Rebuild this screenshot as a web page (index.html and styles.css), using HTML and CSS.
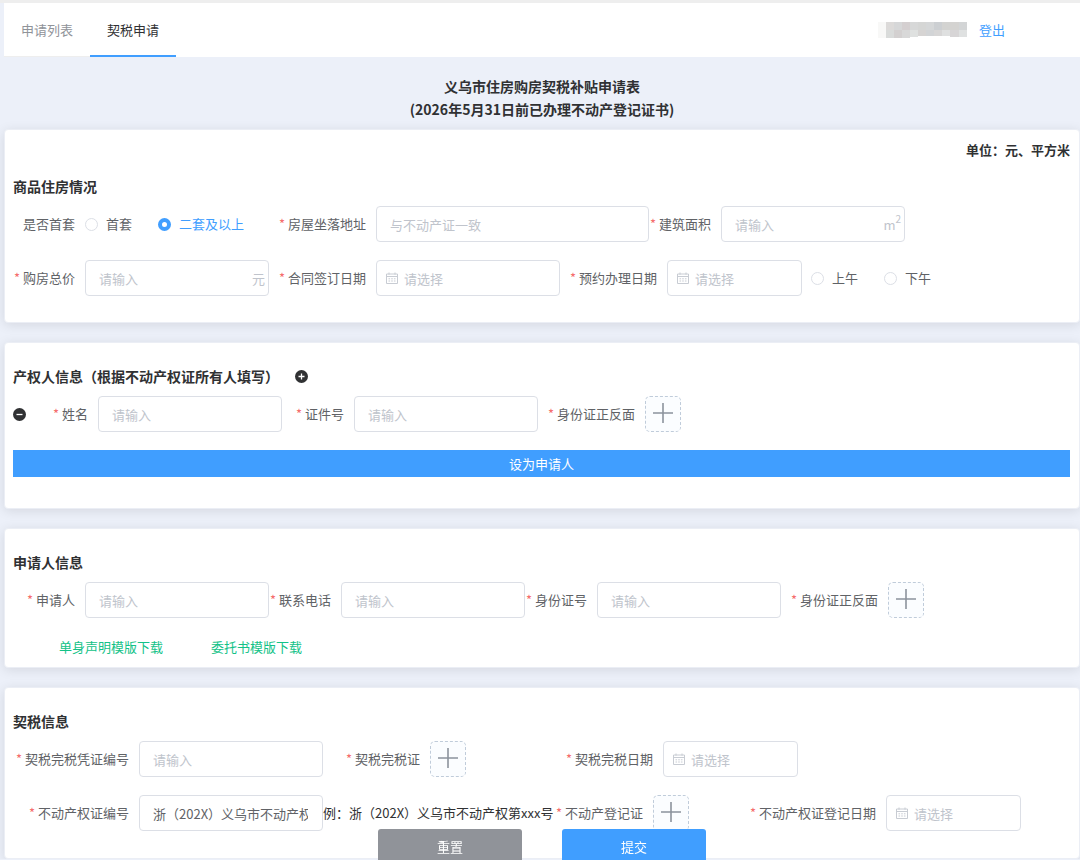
FILE: index.html
```html
<!DOCTYPE html>
<html lang="zh-CN">
<head>
<meta charset="utf-8">
<title>契税申请</title>
<link rel="stylesheet" href="styles.css">
</head>
<body>
<svg class="sprite" aria-hidden="true">
  <symbol id="calendar" viewBox="0 0 12 12">
    <path d="M.5 2h11v9.5H.5zM.5 4.5h11M3 .5v2.2M9 .5v2.2" fill="none" stroke="currentColor"/>
    <path d="M2.5 6.8h1.6M5.2 6.8h1.6M7.9 6.8h1.6M2.5 9h1.6M5.2 9h1.6M7.9 9h1.6" stroke="currentColor"/>
  </symbol>
  <symbol id="plus" viewBox="0 0 20 20">
    <path d="M10 0v20M0 10h20" stroke="currentColor" stroke-width="1.6"/>
  </symbol>
</svg>

<header class="topbar">
  <nav class="tabs">
    <a class="tab" href="#list">申请列表</a>
    <a class="tab tab-active" href="#apply" aria-current="page">契税申请</a>
  </nav>
  <div class="account">
    <svg class="masked-name" viewBox="0 0 89 16" aria-hidden="true" shape-rendering="crispEdges">
      <rect width="8" height="16" fill="#f8f8f7"/>
      <rect x="8" width="8" height="8" fill="#dcdad9"/><rect x="8" y="8" width="8" height="8" fill="#d9dbda"/>
      <rect x="16" width="8" height="8" fill="#d6d7d8"/><rect x="16" y="8" width="8" height="8" fill="#d3d0d0"/>
      <rect x="24" width="8" height="8" fill="#d4cfd0"/><rect x="24" y="8" width="8" height="8" fill="#d8d8d8"/>
      <rect x="32" width="8" height="8" fill="#d7d8d8"/><rect x="32" y="8" width="8" height="7" fill="#dfe1e0"/>
      <rect x="40" width="8" height="8" fill="#d5d6d5"/><rect x="40" y="8" width="8" height="6" fill="#d6d4d3"/>
      <rect x="48" width="8" height="8" fill="#d5d7d8"/><rect x="48" y="8" width="8" height="6" fill="#d2d4d6"/>
      <rect x="56" width="8" height="8" fill="#cccfd2"/><rect x="56" y="8" width="8" height="6" fill="#d7d6d6"/>
      <rect x="64" width="8" height="8" fill="#d3d3d1"/><rect x="64" y="8" width="8" height="6" fill="#dfe0e0"/>
      <rect x="72" width="9" height="8" fill="#d4d3d1"/><rect x="72" y="8" width="9" height="7" fill="#d7d5d6"/>
      <rect x="81" width="8" height="8" fill="#d3d5d6"/><rect x="81" y="8" width="8" height="7" fill="#dfe1e1"/>
    </svg>
    <a class="logout" href="#logout">登出</a>
  </div>
</header>

<form class="page">
  <h1 class="title">义乌市住房购房契税补贴申请表<br>(2026年5月31日前已办理不动产登记证书)</h1>

  <section class="card card-house">
    <p class="unit">单位：元、平方米</p>
    <h2 class="heading">商品住房情况</h2>
    <div class="row">
      <span class="label label-sm">是否首套</span>
      <div class="radios radios-home">
        <label class="radio"><input type="radio" name="home">首套</label>
        <label class="radio"><input type="radio" name="home" checked>二套及以上</label>
      </div>
      <label class="label label-md required" for="address">房屋坐落地址</label>
      <input class="input input-wide" id="address" type="text" placeholder="与不动产证一致">
      <label class="label label-sm required" for="area">建筑面积</label>
      <div class="control">
        <input class="input" id="area" type="text" placeholder="请输入">
        <span class="suffix">m<sup>2</sup></span>
      </div>
    </div>
    <div class="row">
      <label class="label label-sm required" for="price">购房总价</label>
      <div class="control">
        <input class="input" id="price" type="text" placeholder="请输入">
        <span class="suffix">元</span>
      </div>
      <label class="label label-md required" for="signed">合同签订日期</label>
      <div class="control">
        <svg class="prefix"><use href="#calendar"/></svg>
        <input class="input input-date" id="signed" type="text" placeholder="请选择">
      </div>
      <label class="label label-md required" for="booked">预约办理日期</label>
      <div class="control">
        <svg class="prefix"><use href="#calendar"/></svg>
        <input class="input input-date input-short" id="booked" type="text" placeholder="请选择">
      </div>
      <div class="radios radios-time">
        <label class="radio"><input type="radio" name="time">上午</label>
        <label class="radio"><input type="radio" name="time">下午</label>
      </div>
    </div>
  </section>

  <section class="card card-owner">
    <h2 class="heading">产权人信息（根据不动产权证所有人填写）
      <button class="round" type="button" aria-label="添加产权人"><svg viewBox="0 0 13 13"><circle cx="6.5" cy="6.5" r="6.5" fill="currentColor"/><path d="M6.5 3.5v6M3.5 6.5h6" stroke="#fff" stroke-width="1.3"/></svg></button>
    </h2>
    <div class="row">
      <button class="round" type="button" aria-label="删除产权人"><svg viewBox="0 0 13 13"><circle cx="6.5" cy="6.5" r="6.5" fill="currentColor"/><path d="M3.5 6.5h6" stroke="#fff" stroke-width="1.3"/></svg></button>
      <label class="label label-sm required" for="owner">姓名</label>
      <input class="input" id="owner" type="text" placeholder="请输入">
      <label class="label label-sm required" for="owner-id">证件号</label>
      <input class="input" id="owner-id" type="text" placeholder="请输入">
      <label class="label label-md required" for="owner-scan">身份证正反面</label>
      <button class="upload" id="owner-scan" type="button"><svg><use href="#plus"/></svg></button>
    </div>
    <button class="set-applicant" type="button">设为申请人</button>
  </section>

  <section class="card card-applicant">
    <h2 class="heading">申请人信息</h2>
    <div class="row">
      <label class="label label-sm required" for="applicant">申请人</label>
      <input class="input" id="applicant" type="text" placeholder="请输入">
      <label class="label label-sm required" for="phone">联系电话</label>
      <input class="input" id="phone" type="text" placeholder="请输入">
      <label class="label label-sm required" for="id-number">身份证号</label>
      <input class="input" id="id-number" type="text" placeholder="请输入">
      <label class="label label-md required" for="id-scan">身份证正反面</label>
      <button class="upload" id="id-scan" type="button"><svg><use href="#plus"/></svg></button>
    </div>
    <div class="downloads">
      <a href="#single">单身声明模版下载</a>
      <a href="#proxy">委托书模版下载</a>
    </div>
  </section>

  <section class="card card-tax">
    <h2 class="heading">契税信息</h2>
    <div class="row">
      <label class="label label-lg required" for="tax-no">契税完税凭证编号</label>
      <input class="input" id="tax-no" type="text" placeholder="请输入">
      <label class="label label-md required" for="tax-scan">契税完税证</label>
      <button class="upload" id="tax-scan" type="button"><svg><use href="#plus"/></svg></button>
      <label class="label label-xl required" for="tax-date">契税完税日期</label>
      <div class="control">
        <svg class="prefix"><use href="#calendar"/></svg>
        <input class="input input-date input-short" id="tax-date" type="text" placeholder="请选择">
      </div>
    </div>
    <div class="row">
      <label class="label label-lg required" for="cert-no">不动产权证编号</label>
      <input class="input" id="cert-no" type="text" value="浙（202X）义乌市不动产权第xxx号">
      <span class="example">例：浙（202X）义乌市不动产权第xxx号</span>
      <label class="label label-md required" for="cert-scan">不动产登记证</label>
      <button class="upload" id="cert-scan" type="button"><svg><use href="#plus"/></svg></button>
      <label class="label label-xl required" for="cert-date">不动产权证登记日期</label>
      <div class="control">
        <svg class="prefix"><use href="#calendar"/></svg>
        <input class="input input-date input-short" id="cert-date" type="text" placeholder="请选择">
      </div>
    </div>
  </section>

  <div class="actions">
    <button class="action action-reset" type="reset">重置</button>
    <button class="action action-submit" type="submit">提交</button>
  </div>
</form>
</body>
</html>
```
FILE: styles.css
```css
* {
  box-sizing: border-box;
}

body {
  margin: 0;
  padding-left: 4px;
  border-top: 3px solid #eeeeee;
  background: #ecf0f9;
  color: #303133;
  font: 13px/20px "Noto Sans CJK SC", sans-serif;
}

button,
input {
  font: inherit;
}

button {
  padding: 0;
  border: 0;
  cursor: pointer;
}

a {
  text-decoration: none;
}

.sprite {
  position: absolute;
  width: 0;
  height: 0;
}

/* Top bar */
.topbar {
  display: flex;
  justify-content: space-between;
  height: 54px;
  padding-right: 75px;
  background: #ffffff;
}

.tabs {
  display: flex;
}

.tab {
  width: 86px;
  border-bottom: 1px solid #eeeeee;
  color: #909399;
  line-height: 54px;
  text-align: center;
}

.tab-active {
  border-bottom: 2px solid #409eff;
  color: #303133;
}

.account {
  display: flex;
  align-items: center;
  gap: 12px;
}

.masked-name {
  width: 89px;
  height: 16px;
}

.logout {
  color: #409eff;
}

/* Cards */
.title {
  margin: 0;
  padding: 18px 0 8px;
  font-size: 14px;
  line-height: 23px;
  text-align: center;
}

.card {
  margin: 0 0 19px;
  padding: 10px 9px 10px 8px;
  border: 1px solid #ebeef5;
  border-radius: 4px;
  background: #ffffff;
  box-shadow: 0 2px 12px rgba(0, 0, 0, 0.1);
}

.card-house {
  padding-bottom: 26px;
}

.card-owner {
  padding-bottom: 31px;
}

.card-tax {
  margin-bottom: 0;
  padding-bottom: 27px;
}

.unit {
  margin: 0 0 3px;
  font-weight: bold;
  text-align: right;
}

.heading {
  display: flex;
  align-items: center;
  gap: 16px;
  margin: 0;
  padding: 13px 0 10px;
  font-size: 14px;
  line-height: 20px;
}

/* Form rows */
.row {
  display: flex;
  align-items: center;
  white-space: nowrap;
}

.row + .row {
  margin-top: 18px;
}

.label {
  flex: none;
  margin-right: 10px;
  color: #606266;
  text-align: right;
}

.label-sm {
  width: 62px;
}

.label-md {
  width: 97px;
}

.label-lg {
  width: 116px;
}

.label-xl {
  width: 187px;
}

.required::before {
  content: "*";
  margin-right: 3px;
  color: #f56c6c;
}

.control {
  position: relative;
}

.input {
  display: block;
  width: 184px;
  height: 36px;
  padding: 0 14px 0 13px;
  border: 1px solid #dcdfe6;
  border-radius: 4px;
  background: #ffffff;
  color: #606266;
}

.input::placeholder {
  color: #c0c4cc;
}

.input-wide {
  width: 273px;
}

.input-short {
  width: 135px;
}

.input-date {
  padding-left: 27px;
}

.prefix {
  position: absolute;
  top: 12px;
  left: 10px;
  width: 12px;
  height: 12px;
  color: #c8ccd3;
}

.suffix {
  position: absolute;
  top: 9px;
  right: 4px;
  color: #c0c4cc;
}

.suffix sup {
  font-size: 10px;
  line-height: 0;
  vertical-align: 7px;
}

.radios {
  display: flex;
  gap: 26px;
}

.radios-home {
  width: 184px;
}

.radios-time {
  margin-left: 9px;
}

.radio {
  display: flex;
  align-items: center;
  gap: 8px;
  color: #606266;
}

.radio input {
  width: 13px;
  height: 13px;
  margin: 0;
  border: 1px solid #dcdfe6;
  border-radius: 50%;
  background: #ffffff;
  appearance: none;
}

.radio input:checked {
  border: 4px solid #409eff;
}

.radio:has(:checked) {
  color: #409eff;
}

.round {
  display: flex;
  flex: none;
  width: 13px;
  background: none;
  color: #303133;
}

.round svg {
  width: 13px;
  height: 13px;
}

.upload {
  display: flex;
  flex: none;
  align-items: center;
  justify-content: center;
  width: 36px;
  height: 36px;
  padding-bottom: 2px;
  border: 1px dashed #c0ccda;
  border-radius: 5px;
  background: #fbfdff;
  color: #8c939d;
}

.upload svg {
  width: 20px;
  height: 20px;
}

.set-applicant {
  display: block;
  width: 100%;
  height: 27px;
  margin-top: 18px;
  background: #409eff;
  color: #ffffff;
}

.downloads {
  display: flex;
  gap: 48px;
  padding: 19px 0 0 46px;
}

.downloads a {
  color: #13c287;
}

.example {
  width: 223px;
}

/* Floating action buttons */
.actions {
  position: fixed;
  right: 0;
  bottom: -5px;
  left: 4px;
  display: flex;
  justify-content: center;
  gap: 40px;
}

.action {
  width: 144px;
  height: 36px;
  border-radius: 3px;
  color: #ffffff;
}

.action-reset {
  background: #909399;
}

.action-submit {
  background: #409eff;
}
```
